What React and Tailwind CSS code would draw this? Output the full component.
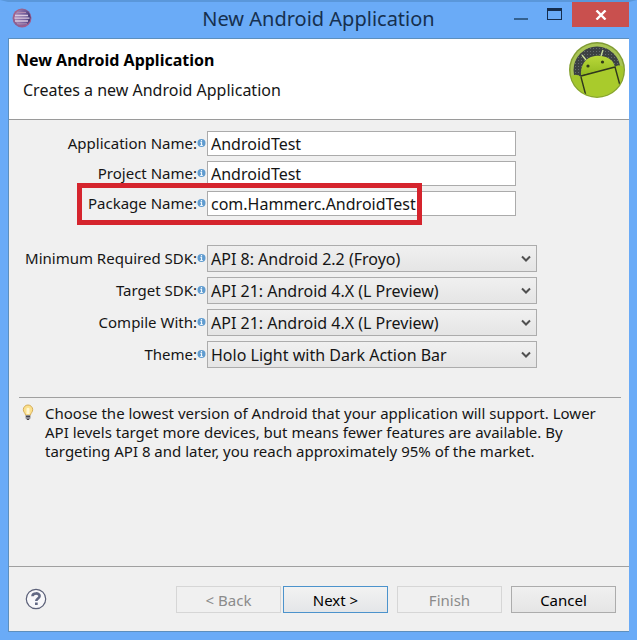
import React from 'react';

const textFields = [
  { id: 'app-name', label: 'Application Name:', value: 'AndroidTest' },
  { id: 'project-name', label: 'Project Name:', value: 'AndroidTest' },
  { id: 'package-name', label: 'Package Name:', value: 'com.Hammerc.AndroidTest', marked: true },
];

const selectFields = [
  { id: 'min-sdk', label: 'Minimum Required SDK:', value: 'API 8: Android 2.2 (Froyo)' },
  { id: 'target-sdk', label: 'Target SDK:', value: 'API 21: Android 4.X (L Preview)' },
  { id: 'compile-with', label: 'Compile With:', value: 'API 21: Android 4.X (L Preview)' },
  { id: 'theme', label: 'Theme:', value: 'Holo Light with Dark Action Bar' },
];

const EclipseIcon = () => (
  <svg width="20" height="20" viewBox="0 0 20 20" aria-hidden="true">
    <defs>
      <linearGradient id="eclipse" x1="0" y1="0" x2="1" y2="1">
        <stop offset="0" stopColor="#b5627f" />
        <stop offset="0.5" stopColor="#8a5f93" />
        <stop offset="1" stopColor="#b05a85" />
      </linearGradient>
      <linearGradient id="globe" x1="0" y1="0" x2="1" y2="0">
        <stop offset="0" stopColor="#a98ab8" />
        <stop offset="0.7" stopColor="#705a98" />
        <stop offset="1" stopColor="#3b3370" />
      </linearGradient>
    </defs>
    <circle cx="10" cy="10" r="9.5" fill="url(#eclipse)" />
    <circle cx="10.5" cy="9.500" r="8" fill="url(#globe)" />
    <path d="M3 7.500h13M2.500 10.200h15M3 13h13" stroke="#d9c9e0" strokeWidth="1.300" />
    <path d="M5 4.500h9M5 15.800h10" stroke="#b08bb0" strokeWidth="1" />
  </svg>
);

const AndroidBadge = () => (
  <svg width="56" height="56" viewBox="0 0 56 56" className="shrink-0" aria-hidden="true">
    <defs>
      <linearGradient id="ring" x1="0" y1="0" x2="0" y2="1">
        <stop offset="0" stopColor="#7f9a34" />
        <stop offset="1" stopColor="#8aa82a" />
      </linearGradient>
      <linearGradient id="body" x1="0" y1="0" x2="0" y2="1">
        <stop offset="0" stopColor="#b9d83a" />
        <stop offset="1" stopColor="#92b91f" />
      </linearGradient>
      <pattern id="mesh" width="3" height="3" patternUnits="userSpaceOnUse">
        <rect width="3" height="3" fill="#3c4143" />
        <rect width="1" height="1" fill="#666c70" />
      </pattern>
      <clipPath id="disc">
        <circle cx="28" cy="28" r="26.500" />
      </clipPath>
    </defs>
    <circle cx="28" cy="28" r="28" fill="url(#ring)" />
    <circle cx="28" cy="28" r="26.500" fill="#a9c455" />
    <circle cx="28" cy="28" r="23.500" fill="url(#mesh)" />
    <g clipPath="url(#disc)">
      <path d="M17 18l-4-5M32 14l2-6" stroke="#c9dc9a" strokeWidth="1.400" />
      <path d="M12 33.500C11 23 17 15 26 14c9-1 18 2 20 11z" fill="url(#body)" />
      <path d="M12 34l34-9 8 31H15z" fill="#a9cb2c" />
      <path d="M0 36q6-6 12-1l6 21H0zM46 25q4-4 10 1v30h-5z" fill="#a3c62b" />
      <path d="M12 34L46 25M12 35l5 19M46 25l6 22" fill="none" stroke="#30371d" strokeWidth="1.400" />
      <circle cx="19" cy="24" r="1.600" fill="#303a18" />
      <circle cx="33.500" cy="20" r="1.600" fill="#303a18" />
    </g>
  </svg>
);

const InfoIcon = () => (
  <svg width="10" height="10" viewBox="0 0 10 10" className="mb-px shrink-0" aria-hidden="true">
    <circle cx="4.500" cy="5" r="4" fill="#5f9bcf" />
    <path d="M4.500 2v1.200M3.400 4.400h1.100v3M3.200 7.500h2.600" fill="none" stroke="#f2f8fd" strokeWidth="1.200" />
  </svg>
);

const BulbIcon = () => (
  <svg width="12" height="17" viewBox="0 0 12 17" className="shrink-0" aria-hidden="true">
    <path
      d="M6 1a4.700 4.700 0 0 0-4.700 4.700c0 2.300 1.900 3.300 2.400 5.600h4.600c.5-2.300 2.400-3.300 2.400-5.600A4.700 4.700 0 0 0 6 1z"
      fill="#fbe08c"
      stroke="#d5ad58"
    />
    <path d="M4.500 4.500Q6 3 7.500 4.500V10h-3z" fill="#fff7d4" />
    <rect x="3.500" y="11" width="5" height="4" rx="1" fill="#8c8c94" />
    <path d="M4 12.500h4M4.800 15.500h2.400" stroke="#45454d" />
  </svg>
);

const HelpIcon = () => (
  <svg width="22" height="22" viewBox="0 0 22 22" aria-hidden="true">
    <circle cx="11" cy="11" r="9.700" fill="#f8f8fa" stroke="#5b6078" strokeWidth="1.200" />
    <path
      d="M7.500 8.300C7.500 4.500 14.600 4.500 14.600 8.100c0 2.400-3.300 2.500-3.300 5"
      fill="none"
      stroke="#626984"
      strokeWidth="2.600"
    />
    <rect x="10" y="14.500" width="2.700" height="2.500" fill="#626984" />
  </svg>
);

const FieldLabel = ({ htmlFor, children }) => (
  <div className="flex w-[198px] shrink-0 items-center justify-end">
    <label htmlFor={htmlFor} className="whitespace-nowrap text-[15px]">
      {children}
    </label>
    <InfoIcon />
  </div>
);

const dialogButton = 'h-[27px] w-[105px] border text-center text-[15px] leading-5';

export default function App() {
  return (
    <div className="flex min-h-screen flex-col border-x-8 border-b-8 border-t-2 border-[#6aabf7] border-t-[#5a97da] bg-[#6aabf7] font-['Noto_Sans','Open_Sans',sans-serif] text-base text-[#151515]">
      {/* Title bar */}
      <header className="flex h-9 shrink-0 items-start">
        <div className="w-[126px] shrink-0 pl-1 pt-[6px]">
          <EclipseIcon />
        </div>
        <h1 className="flex-1 whitespace-nowrap pt-[3px] text-center text-xl leading-7 text-[#16304f]">
          New Android Application
        </h1>
        <div className="flex w-[126px] shrink-0 items-start justify-end">
          <button aria-label="Minimize" className="flex h-6 w-8 items-center justify-center">
            <svg width="14" height="16" viewBox="0 0 14 16">
              <path d="M0 12h14v2H0z" fill="#34618f" />
            </svg>
          </button>
          <button aria-label="Maximize" className="flex h-6 w-[35px] items-center justify-center">
            <svg width="15" height="12" viewBox="0 0 15 12">
              <path d="M0 0h15v12H0zM1 3v8h13V3z" fill="#152d4d" fillRule="evenodd" />
            </svg>
          </button>
          <button aria-label="Close" className="flex h-[25px] w-[57px] shrink-0 items-center justify-center bg-[#c9504e]">
            <svg width="12" height="10" viewBox="0 0 12 10">
              <path d="M1.500 0.500l9 9M10.500 0.500l-9 9" stroke="#fff" strokeWidth="2.400" />
            </svg>
          </button>
        </div>
      </header>

      <main className="flex flex-1 flex-col border border-r-0 border-[#5d8fbd] bg-[#f0f0f0]">
        {/* Wizard heading */}
        <section className="flex h-[81px] shrink-0 justify-between border-b border-[#9a9a9a] bg-white pl-[7px] pr-1 pt-[3px]">
          <div className="pt-2">
            <h2 className="text-base font-bold leading-5 text-black">New Android Application</h2>
            <p className="pl-[7px] pt-[10px] leading-5">Creates a new Android Application</p>
          </div>
          <AndroidBadge />
        </section>

        <form className="flex flex-1 flex-col" onSubmit={(e) => e.preventDefault()}>
          <div className="flex flex-col gap-[5px] pr-[113px] pt-[11px]">
            {textFields.map((field) => (
              <div key={field.id} className="relative flex h-[25px]">
                <FieldLabel htmlFor={field.id}>{field.label}</FieldLabel>
                <input
                  id={field.id}
                  type="text"
                  defaultValue={field.value}
                  className="min-w-0 flex-1 border border-[#ababab] bg-white px-[3px] outline-none"
                />
                {field.marked && (
                  <span className="pointer-events-none absolute -top-2 left-[68px] h-[42px] w-[345px] border-[5px] border-[#d5242d]" />
                )}
              </div>
            ))}
          </div>

          <div className="flex flex-col gap-[5px] pr-[92px] pt-[29px]">
            {selectFields.map((field) => (
              <div key={field.id} className="flex h-[27px]">
                <FieldLabel htmlFor={field.id}>{field.label}</FieldLabel>
                <div className="relative flex min-w-0 flex-1">
                  <select
                    id={field.id}
                    className="w-full appearance-none border border-[#acacac] bg-linear-to-b from-[#f0f0f0] to-[#e5e5e5] px-[3px] outline-none"
                  >
                    <option>{field.value}</option>
                  </select>
                  <svg
                    width="10"
                    height="8"
                    viewBox="0 0 10 8"
                    className="pointer-events-none absolute right-[6px] top-[10px]"
                    aria-hidden="true"
                  >
                    <path d="M1 1.500l4 4 4-4" fill="none" stroke="#505050" strokeWidth="2" />
                  </svg>
                </div>
              </div>
            ))}
          </div>

          {/* Tip */}
          <div className="ml-[10px] mr-2 mt-[29px] flex gap-[11px] border-t border-[#a0a0a0] pl-[3px] pt-[6px]">
            <BulbIcon />
            <p className="text-[15px] leading-[19px]">
              Choose the lowest version of Android that your application will support. Lower API levels target more
              devices, but means fewer features are available. By targeting API 8 and later, you reach approximately 95%
              of the market.
            </p>
          </div>

          {/* Dialog buttons */}
          <footer className="mt-auto flex h-[65px] shrink-0 items-start border-t border-[#a0a0a0] pl-4 pr-[13px] pt-[19px]">
            <button type="button" aria-label="Help" className="mt-[2px]">
              <HelpIcon />
            </button>
            <div className="ml-auto flex">
              <button type="button" disabled className={`${dialogButton} border-[#d6d6d6] text-[#8b8b8b]`}>
                &lt; Back
              </button>
              <button
                type="submit"
                className={`${dialogButton} ml-[2px] border-[#4c93cc] bg-linear-to-b from-[#f2f2f2] to-[#e4e6e8] text-black`}
              >
                Next &gt;
              </button>
              <button type="button" disabled className={`${dialogButton} ml-[9px] border-[#d6d6d6] text-[#8b8b8b]`}>
                Finish
              </button>
              <button
                type="button"
                className={`${dialogButton} ml-[9px] border-[#acacac] bg-linear-to-b from-[#f0f0f0] to-[#e5e5e5] text-black`}
              >
                Cancel
              </button>
            </div>
          </footer>
        </form>
      </main>
    </div>
  );
}
